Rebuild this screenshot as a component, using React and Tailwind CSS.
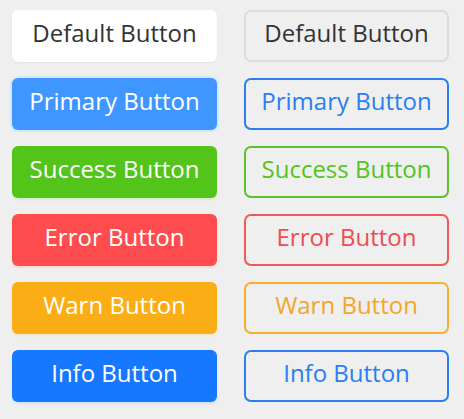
import React from "react";

const rows = [
  {
    label: "Default Button",
    solid: "bg-white text-[#333333] shadow-[0_1px_2px_rgba(0,0,0,0.05)]",
    outline: "border-[#dcdcdc] text-[#333333]",
  },
  {
    label: "Primary Button",
    solid: "bg-[#4096ff] text-white ring-2 ring-[#d6e6fb]",
    outline: "border-[#2a7ef0] text-[#2a7ef0]",
  },
  {
    label: "Success Button",
    solid: "bg-[#52c41a] text-white shadow-[0_2px_2px_rgba(82,196,26,0.12)]",
    outline: "border-[#5cc12e] text-[#52c41a]",
  },
  {
    label: "Error Button",
    solid: "bg-[#ff4d4f] text-white shadow-[0_2px_2px_rgba(255,77,79,0.12)]",
    outline: "border-[#f0595c] text-[#ee4d50]",
  },
  {
    label: "Warn Button",
    solid: "bg-[#faad14] text-white shadow-[0_2px_2px_rgba(250,173,20,0.12)]",
    outline: "border-[#f7ae2e] text-[#f4a625]",
  },
  {
    label: "Info Button",
    solid: "bg-[#1677ff] text-white shadow-[0_2px_2px_rgba(22,119,255,0.12)]",
    outline: "border-[#2a7ef0] text-[#2a7ef0]",
  },
];

export default function App() {
  return (
    <div
      className="min-h-[419px] w-[464px] bg-[#efefef] pt-[10px] pl-[12px]"
      style={{ fontFamily: '"Open Sans", "Noto Sans", sans-serif' }}
    >
      <div className="grid grid-cols-[205px_205px] gap-x-[27px] gap-y-[16px]">
        {rows.map((row) => (
          <React.Fragment key={row.label}>
            <button
              className={`flex h-[52px] items-center justify-center rounded-[6px] pb-[6px] text-[24px] leading-none ${row.solid}`}
            >
              {row.label}
            </button>
            <button
              className={`flex h-[52px] items-center justify-center rounded-[7px] border-2 bg-transparent pb-[6px] text-[24px] leading-none ${row.outline}`}
            >
              {row.label}
            </button>
          </React.Fragment>
        ))}
      </div>
    </div>
  );
}
